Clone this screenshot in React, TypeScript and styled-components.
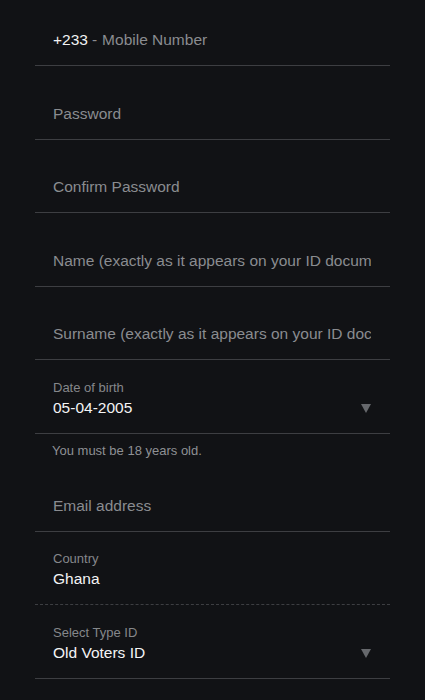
import React from 'react';
import styled, { createGlobalStyle } from 'styled-components';

const GlobalStyle = createGlobalStyle`
  html, body {
    margin: 0;
    padding: 0;
    background: #111215;
    overflow: hidden;
  }
  body {
    font-family: "Liberation Sans", Arial, sans-serif;
  }
`;

type FieldDef = {
  placeholder: string;
  type?: string;
};

const textFields: FieldDef[] = [
  { placeholder: 'Password', type: 'password' },
  { placeholder: 'Confirm Password', type: 'password' },
  { placeholder: 'Name (exactly as it appears on your ID document)' },
  { placeholder: 'Surname (exactly as it appears on your ID document)' },
];

const Arrow = () => (
  <StyledArrow width='10' height='9' viewBox='0 0 10 9'>
    <polygon points='0,0 10,0 5,9' fill='#66686c' />
  </StyledArrow>
);

const App = () => {
  return (
    <>
      <GlobalStyle />
      <StyledPage>
        <StyledForm>
          <StyledField>
            <StyledPrefix>+233</StyledPrefix>
            <StyledDash>-</StyledDash>
            <StyledInput placeholder='Mobile Number' />
          </StyledField>

          {textFields.map((f) => (
            <StyledField key={f.placeholder}>
              <StyledInput type={f.type || 'text'} placeholder={f.placeholder} />
            </StyledField>
          ))}

          <StyledField>
            <StyledStack>
              <StyledLabel>Date of birth</StyledLabel>
              <StyledValue>05-04-2005</StyledValue>
            </StyledStack>
            <Arrow />
          </StyledField>
          <StyledHelper>You must be 18 years old.</StyledHelper>

          <StyledField>
            <StyledInput type='email' placeholder='Email address' />
          </StyledField>

          <StyledField dashed>
            <StyledStack>
              <StyledLabel>Country</StyledLabel>
              <StyledValue>Ghana</StyledValue>
            </StyledStack>
          </StyledField>

          <StyledField>
            <StyledStack>
              <StyledLabel>Select Type ID</StyledLabel>
              <StyledValue>Old Voters ID</StyledValue>
            </StyledStack>
            <Arrow />
          </StyledField>
        </StyledForm>
      </StyledPage>
    </>
  );
};

const StyledPage = styled.div`
  width: 425px;
  height: 700px;
  overflow: hidden;
  background: #111215;
`;

const StyledForm = styled.div`
  display: flex;
  flex-direction: column;
  margin: -7.5px 35px 0 35px;
`;

const StyledField = styled.div<{ dashed?: boolean }>`
  display: flex;
  align-items: flex-end;
  height: 73.5px;
  box-sizing: border-box;
  padding: 0 19px 16px 18px;
  border-bottom: 1px ${(p) => (p.dashed ? 'dashed' : 'solid')} #3d3e42;
`;

const StyledPrefix = styled.span`
  color: #f2f2f3;
  font-size: 15.5px;
  line-height: 18px;
  margin-right: 4px;
`;

const StyledDash = styled.span`
  color: #8a8c90;
  font-size: 15.5px;
  line-height: 18px;
  margin-right: 5px;
`;

const StyledInput = styled.input`
  flex: 1;
  min-width: 0;
  background: transparent;
  border: none;
  outline: none;
  padding: 0;
  margin: 0;
  font-family: "Liberation Sans", Arial, sans-serif;
  font-size: 15.5px;
  line-height: 18px;
  height: 18px;
  color: #f2f2f3;

  &::placeholder {
    color: #8a8c90;
  }
`;

const StyledStack = styled.div`
  flex: 1;
  display: flex;
  flex-direction: column;
  gap: 4px;
`;

const StyledLabel = styled.span`
  color: #85878b;
  font-size: 13px;
  line-height: 15px;
`;

const StyledValue = styled.span`
  color: #f4f4f5;
  font-size: 15.5px;
  line-height: 18px;
`;

const StyledArrow = styled.svg`
  flex-shrink: 0;
  margin: 0 0 4px 0;
`;

const StyledHelper = styled.div`
  color: #8e9094;
  font-size: 13px;
  line-height: 15px;
  padding: 9px 0 0 17px;
  height: 24.5px;
  box-sizing: border-box;
`;

export default App;
